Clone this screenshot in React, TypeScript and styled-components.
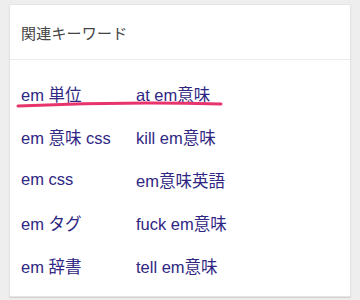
import React from 'react';
import styled, { createGlobalStyle } from 'styled-components';

const GlobalStyle = createGlobalStyle`
  html, body {
    margin: 0;
    padding: 0;
    background: #eeeeee;
  }
  body {
    font-family: 'Liberation Sans', 'Noto Sans CJK JP', sans-serif;
    -webkit-font-smoothing: antialiased;
  }
`;

const Page = styled.div`
  padding: 4px 9px 3px;
`;

const Card = styled.section`
  position: relative;
  background: #ffffff;
  border: 1px solid #e4e4e4;
  border-radius: 2px;
  box-shadow: 0 1px 1px rgba(0, 0, 0, 0.12);
`;

const Header = styled.h2`
  margin: 0;
  height: 54px;
  display: flex;
  align-items: center;
  padding: 0 11px;
  border-bottom: 1px solid #ececec;
  font-size: 15px;
  font-weight: normal;
  color: #444444;
  font-family: 'Noto Sans CJK JP', sans-serif;
  letter-spacing: 0.2px;
`;

const KeywordGrid = styled.ul`
  list-style: none;
  margin: 0;
  padding: 12px 11px 9px;
  display: grid;
  grid-template-columns: 115px 1fr;
  grid-auto-rows: 43px;
`;

const Keyword = styled.li`
  display: flex;
  align-items: center;
`;

const KeywordLink = styled.a`
  font-size: 16.5px;
  color: #2f2783;
  text-decoration: none;
  font-family: 'Liberation Sans', 'Noto Sans CJK JP', sans-serif;
`;

const Mark = styled.svg`
  position: absolute;
  left: 0;
  top: 0;
  pointer-events: none;
`;

const keywords = [
  'em 単位',
  'at em意味',
  'em 意味 css',
  'kill em意味',
  'em css',
  'em意味英語',
  'em タグ',
  'fuck em意味',
  'em 辞書',
  'tell em意味',
];

export default function App() {
  return (
    <>
      <GlobalStyle />
      <Page>
        <Card>
          <Header>関連キーワード</Header>
          <KeywordGrid>
            {keywords.map((k) => (
              <Keyword key={k}>
                <KeywordLink href="#">{k}</KeywordLink>
              </Keyword>
            ))}
          </KeywordGrid>
          <Mark width="240" height="120" viewBox="0 0 240 120">
            <path
              d="M8 101 Q 110 96.5 211 99"
              fill="none"
              stroke="#e8346c"
              strokeWidth="3"
              strokeLinecap="round"
            />
          </Mark>
        </Card>
      </Page>
    </>
  );
}
